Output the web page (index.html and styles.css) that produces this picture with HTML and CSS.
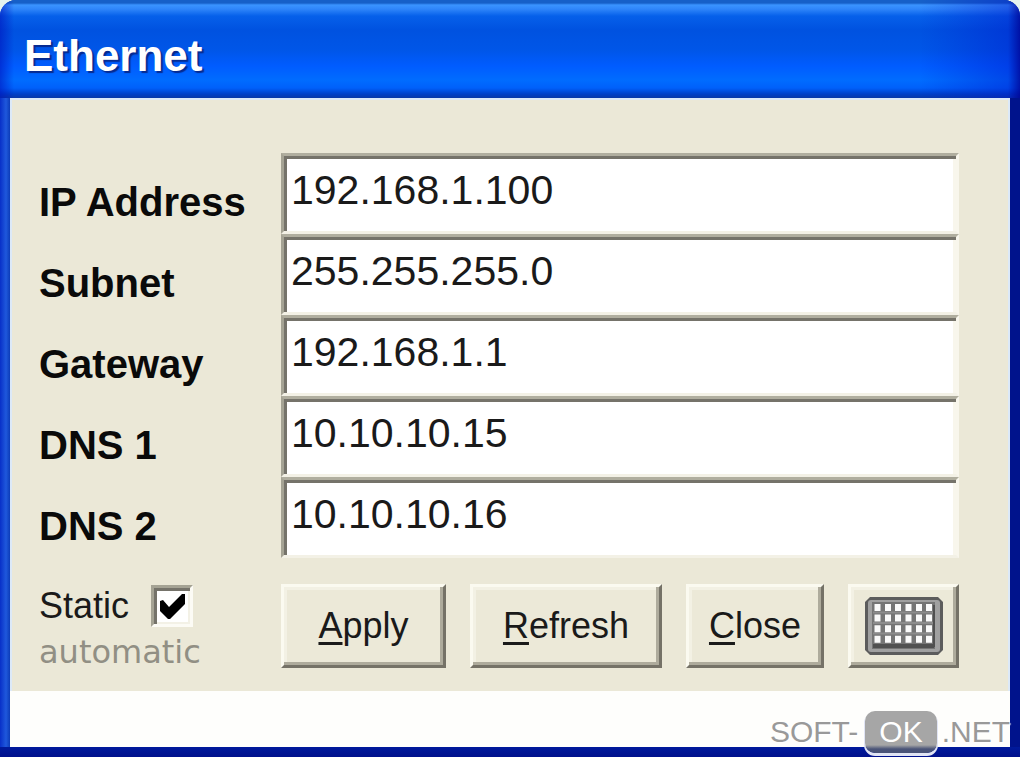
FILE: index.html
```html
<!DOCTYPE html>
<html lang="en">
<head>
  <meta charset="UTF-8">
  <meta name="viewport" content="width=device-width, initial-scale=1.0">
  <title>Ethernet</title>
  <link rel="stylesheet" href="styles.css">
</head>
<body>

<div class="window">
  <header class="titlebar">
    <h1>Ethernet</h1>
  </header>

  <form class="panel">
    <div class="row">
      <label for="ip">IP Address</label>
      <input type="text" id="ip" name="ip" value="192.168.1.100">
    </div>
    <div class="row">
      <label for="subnet">Subnet</label>
      <input type="text" id="subnet" name="subnet" value="255.255.255.0">
    </div>
    <div class="row">
      <label for="gateway">Gateway</label>
      <input type="text" id="gateway" name="gateway" value="192.168.1.1">
    </div>
    <div class="row">
      <label for="dns1">DNS 1</label>
      <input type="text" id="dns1" name="dns1" value="10.10.10.15">
    </div>
    <div class="row">
      <label for="dns2">DNS 2</label>
      <input type="text" id="dns2" name="dns2" value="10.10.10.16">
    </div>

    <div class="footer">
      <div class="mode">
        <div class="static">
          <label for="static">Static</label>
          <input type="checkbox" id="static" name="static" checked>
        </div>
        <span class="hint">automatic</span>
      </div>
      <div class="buttons">
        <button type="button"><u>A</u>pply</button>
        <button type="button"><u>R</u>efresh</button>
        <button type="button"><u>C</u>lose</button>
        <button type="button" aria-label="Keyboard">
          <svg width="78" height="58" viewBox="0 0 78 58">
            <path d="M5 0H73L78 5V53L73 58H5L0 53V5Z" fill="#5c5c5c"/>
            <rect x="3" y="3" width="72" height="52" rx="3" fill="#a0a0a0"/>
            <rect x="7" y="5" width="63" height="47" fill="#757575"/>
            <path d="M8 15.500H69M8 26H69M8 36.500H69" stroke="#8c8c8c" stroke-width="2"/>
            <path d="M8 49H69" stroke="#505050" stroke-width="4"/>
            <path d="M69 8V50" stroke="#505050" stroke-width="2"/>
            <path d="M12.500 7V46M23 7V46M33 7V46M43.500 7V46M54 7V46M64 7V46" stroke="#fafafa" stroke-width="6" stroke-dasharray="7 3.600"/>
          </svg>
        </button>
      </div>
    </div>
  </form>

  <div class="blank"></div>

  <div class="watermark">
    <span>SOFT-</span><span class="badge">OK</span><span>.NET</span>
  </div>
</div>

</body>
</html>
```
FILE: styles.css
```css
* {
  box-sizing: border-box;
}

body {
  margin: 0;
  font-family: "Liberation Sans", Arial, sans-serif;
  background: #e4f3ee;
}

.window {
  position: relative;
  display: flex;
  flex-direction: column;
  min-height: 100vh;
  padding: 0 10px 10px;
  border-radius: 16px 16px 0 0;
  background:
    linear-gradient(#001a9c, #00108c) bottom / 100% 10px no-repeat,
    linear-gradient(to right, #0830c8 0, #1f58dc 6px, #0c3cb8 10px, #00138c 50%);
  overflow: hidden;
}

.titlebar {
  display: flex;
  align-items: center;
  height: 98px;
  margin: 0 -10px;
  padding: 14px 24px 0;
  background:
    linear-gradient(to right, rgba(0, 20, 190, 0.6) 0, rgba(0, 20, 190, 0) 14px),
    linear-gradient(to left, rgba(0, 0, 150, 0.8) 0, rgba(0, 20, 200, 0.4) 12px, rgba(0, 20, 200, 0) 100px),
    linear-gradient(#1660c8 0, #1660c8 3px, #3a94ff 5px, #2f86fa 9px, #0660ea 16px, #0052e0 30px, #0056e8 50px, #005cff 66px, #006cff 80px, #0060fa 88px, #0040c8 94px, #0838a8 98px);
}

h1 {
  margin: 0;
  font-size: 44px;
  line-height: 50px;
  color: #fff;
  text-shadow: 2px 2px 1px #062a90;
}

.panel {
  padding: 53px 49px 15px 27px;
  border: 2px solid #dce9f8;
  border-bottom: 0;
  background: #ebe8d7;
}

.row {
  display: grid;
  grid-template-columns: 242px 1fr;
}

.row label {
  padding-top: 25px;
  font-size: 40px;
  line-height: 48px;
  font-weight: bold;
  color: #0a0a0a;
}

.row input {
  width: 100%;
  height: 81px;
  padding: 0 7px 6px;
  border: 3px solid;
  border-color: #b0ae9f #f8f6ec #f3f1e6 #a5a394;
  border-radius: 0;
  outline: none;
  background: #fff;
  box-shadow: inset 3px 3px #75736a, inset -3px 0 #f8f6ec;
  font: 41px "Liberation Sans", Arial, sans-serif;
  color: #1a1a1a;
}

.footer {
  display: grid;
  grid-template-columns: 242px 1fr;
  padding-top: 26px;
}

.static {
  display: flex;
  align-items: center;
  gap: 22px;
  height: 44px;
  font-size: 36px;
  color: #1a1a1a;
}

.static input {
  appearance: none;
  width: 42px;
  height: 42px;
  margin: 0;
  border: 3px solid;
  border-color: #a5a394 #fcfbf5 #fcfbf5 #a5a394;
  background: #fff url("data:image/svg+xml,%3Csvg xmlns='http://www.w3.org/2000/svg' viewBox='0 0 36 36'%3E%3Cpath d='M6 13L9 12L15 19L28 6H31V16L16 31H14L6 23Z' fill='%23000'/%3E%3C/svg%3E") center / 100%;
  box-shadow: inset 3px 3px #75736a, inset -2px -2px #f3f1e6;
}

.hint {
  display: block;
  font: 32px/48px "DejaVu Sans", Verdana, sans-serif;
  color: #918f84;
}

.buttons {
  display: grid;
  grid-template-columns: 165fr 192fr 138fr 111fr;
  align-items: start;
  gap: 24px;
}

button {
  display: flex;
  align-items: center;
  justify-content: center;
  height: 84px;
  padding: 0;
  border: 3px solid;
  border-color: #fbfaf0 #757267 #757267 #fbfaf0;
  border-radius: 0;
  background: #ece9d8;
  box-shadow: inset -3px -3px #aeab9c, inset 3px 3px #f3f1e4;
  font: 36px "Liberation Sans", Arial, sans-serif;
  color: #1a1a1a;
}

button u {
  text-decoration-thickness: 3px;
  text-underline-offset: 4px;
}

.blank {
  flex: 1;
  min-height: 54px;
  background: #fefefc;
}

.watermark {
  position: absolute;
  right: 10px;
  bottom: 4px;
  display: flex;
  align-items: center;
  font-size: 30px;
  line-height: 42px;
  color: #999;
  text-shadow: 1px 1px 1px #fff;
}

.badge {
  margin: 0 5px 0 7px;
  padding: 0 14px;
  border-radius: 10px;
  background: linear-gradient(#a6a6a6 34px, #4a5478 38px);
  box-shadow: 0 2px 0 1px #e0e4f4;
  color: #fff;
  text-shadow: none;
}
```
